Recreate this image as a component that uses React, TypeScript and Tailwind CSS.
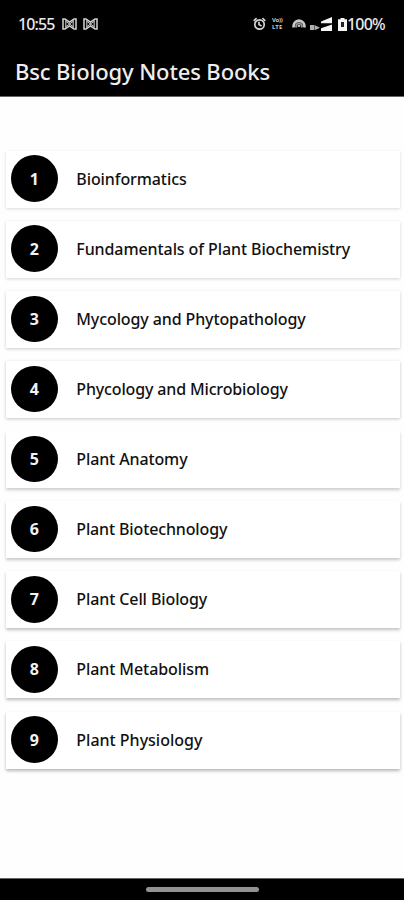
import React from 'react';

interface Book {
  id: number;
  title: string;
  tracking: string;
  shadow: string;
}

const books: Book[] = [
  { id: 1, title: 'Bioinformatics', tracking: 'tracking-[-0.09px]', shadow: 'shadow-[0_1px_3px_rgba(0,0,0,0.15)]' },
  { id: 2, title: 'Fundamentals of Plant Biochemistry', tracking: 'tracking-[-0.09px]', shadow: 'shadow-[0_1px_3px_rgba(0,0,0,0.17)]' },
  { id: 3, title: 'Mycology and Phytopathology', tracking: 'tracking-[-0.11px]', shadow: 'shadow-[0_1px_3px_rgba(0,0,0,0.2)]' },
  { id: 4, title: 'Phycology and Microbiology', tracking: 'tracking-[-0.15px]', shadow: 'shadow-[0_1px_3px_rgba(0,0,0,0.23)]' },
  { id: 5, title: 'Plant Anatomy', tracking: 'tracking-[-0.12px]', shadow: 'shadow-[0_2px_3px_rgba(0,0,0,0.2)]' },
  { id: 6, title: 'Plant Biotechnology', tracking: 'tracking-[-0.14px]', shadow: 'shadow-[0_2px_3px_rgba(0,0,0,0.22)]' },
  { id: 7, title: 'Plant Cell Biology', tracking: 'tracking-[-0.1px]', shadow: 'shadow-[0_2px_3px_rgba(0,0,0,0.24)]' },
  { id: 8, title: 'Plant Metabolism', tracking: 'tracking-[-0.08px]', shadow: 'shadow-[0_2px_3px_rgba(0,0,0,0.26)]' },
  { id: 9, title: 'Plant Physiology', tracking: 'tracking-[0px]', shadow: 'shadow-[0_2px_3px_rgba(0,0,0,0.28)]' },
];

function BowIcon() {
  return (
    <svg width="15" height="12" viewBox="0 0 15 12" fill="none" stroke="#d4d4d4" strokeWidth="1.5">
      <path d="M1 1h2l4.5 3L12 1h2v10h-2L7.5 8 3 11H1z" />
      <path d="M3.8 2v8M11.2 2v8M4 3.5l7 5M11 3.5l-7 5" strokeWidth="1" />
    </svg>
  );
}

function AlarmIcon() {
  return (
    <svg width="13" height="14" viewBox="0 0 13 14" fill="none" stroke="#d4d4d4" strokeWidth="1.7">
      <circle cx="6.5" cy="7.5" r="4.7" />
      <path d="M.7 3.8L3.6 1.2M12.3 3.8L9.4 1.2M6 4.8v2.7l2.6 1.6" />
    </svg>
  );
}

function HotspotIcon() {
  return (
    <svg width="14" height="12" viewBox="0 0 14 12" fill="none" stroke="#c8c8c8">
      <path d="M1.8 9.5a5.4 5.4 0 1 1 10.4 0" strokeWidth="2.6" />
      <path d="M4.6 9.5a2.8 2.8 0 1 1 4.8 0" strokeWidth="1.8" stroke="#999" />
      <circle cx="7" cy="7.8" r="1.3" fill="#c8c8c8" stroke="none" />
    </svg>
  );
}

function SignalIcon() {
  return (
    <svg width="24" height="15" viewBox="0 0 24 15" fill="#f5f5f5">
      <path d="M23 0v6.3H12V4.6zM23 7.6v6.4H12v-2.8z" />
      <path d="M1 8h4.5v5H1zM6 8.3l5 2.5-5 2.2z" fill="#b0b0b0" />
    </svg>
  );
}

function BatteryIcon() {
  return (
    <svg width="9" height="13" viewBox="0 0 9 13" fill="#f5f5f5">
      <path d="M2.5 0h4v1.2H9V13H0V1.2h2.5z" />
      <path d="M3 4h3v5H3z" fill="#222" />
    </svg>
  );
}

function StatusBar() {
  return (
    <div className="flex h-12 items-center pl-[18px] pr-[18px] text-[#e8e8e8]">
      <span className="w-[37px] whitespace-nowrap text-base font-medium tracking-[-0.9px]">10:55</span>
      <div className="ml-[7px] flex gap-[6px]">
        <BowIcon />
        <BowIcon />
      </div>
      <div className="ml-auto flex items-center">
        <AlarmIcon />
        <div className="ml-[6px] flex w-[14px] flex-col text-[6px] leading-[7px] font-bold text-[#c8c8c8]">
          <span className="h-[7px] overflow-hidden tracking-[-0.3px] whitespace-nowrap">Vo))</span>
          <span className="h-[7px] overflow-hidden tracking-[0.1px] whitespace-nowrap">LTE</span>
        </div>
        <span className="ml-[6px]"><HotspotIcon /></span>
        <span className="ml-[3px]"><SignalIcon /></span>
        <span className="ml-[5px]"><BatteryIcon /></span>
        <span className="w-[39px] whitespace-nowrap text-base font-medium tracking-[-0.8px]">100%</span>
      </div>
    </div>
  );
}

function BookCard({ book }: { book: Book }) {
  return (
    <div className={`flex h-[57px] items-center bg-white pb-px pl-[5px] ${book.shadow}`}>
      <div className="flex h-[46.5px] w-[46.5px] shrink-0 items-center justify-center rounded-full bg-black text-base font-bold text-[#f2f2f2]">
        {book.id}
      </div>
      <span className={`ml-[18.8px] whitespace-nowrap text-base font-medium text-[#111] ${book.tracking}`}>
        {book.title}
      </span>
    </div>
  );
}

export default function App() {
  return (
    <div className="flex h-[900px] w-[404px] flex-col overflow-hidden bg-[#fefefe] font-['Noto_Sans',sans-serif]">
      <header className="h-[97px] shrink-0 border-b border-[#666] bg-black">
        <StatusBar />
        <h1 className="flex h-[47px] items-center pl-[15px] text-[22px] font-medium tracking-[-0.13px] whitespace-nowrap text-[#eee]">
          Bsc Biology Notes Books
        </h1>
      </header>

      <main className="flex flex-1 flex-col gap-[13.15px] pt-[53.5px] pr-[4px] pl-[6px]">
        {books.map((book) => (
          <BookCard key={book.id} book={book} />
        ))}
      </main>

      {/* Gesture bar */}
      <footer className="flex h-[22px] shrink-0 items-center justify-center border-t border-[#666] bg-black">
        <div className="h-[5px] w-[113px] rounded-full bg-[#929292]" />
      </footer>
    </div>
  );
}
